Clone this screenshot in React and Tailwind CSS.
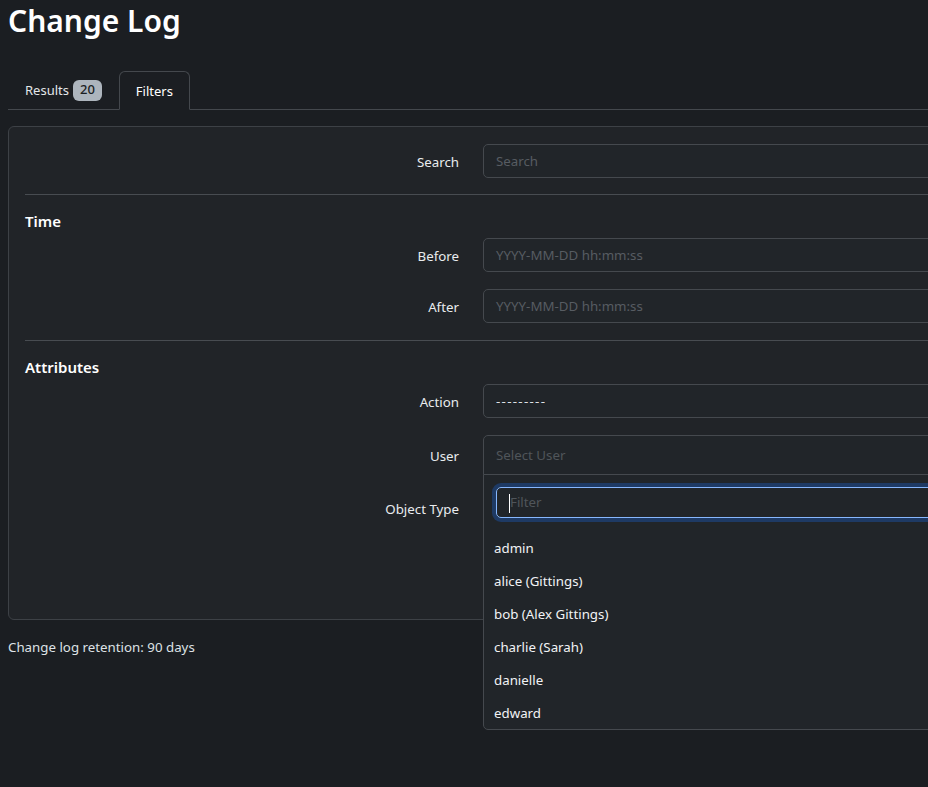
import React from "react";

const font = { fontFamily: '"Noto Sans", "Open Sans", sans-serif' };

function Row({ label, children, className = "" }) {
  return (
    <div className={"flex items-center " + className}>
      <div className="w-[446px] shrink-0 pr-3 pt-[3px] text-right text-[13.3px] text-[#e9ecef]">{label}</div>
      <div className="flex-1 pl-3">{children}</div>
    </div>
  );
}

function TextInput({ placeholder, value }) {
  return (
    <div className="h-[34px] w-full rounded-[5px] border border-[#45494e] bg-[#212529] px-3 pt-[2px] flex items-center text-[13.3px]">
      {value ? (
        <span className="text-[#dee2e6] tracking-[1.3px]">{value}</span>
      ) : (
        <span className="text-[#575c62]">{placeholder}</span>
      )}
    </div>
  );
}

export default function App() {
  const users = ["admin", "alice (Gittings)", "bob (Alex Gittings)", "charlie (Sarah)", "danielle", "edward"];
  return (
    <div style={font} className="w-[928px] h-[787px] overflow-hidden bg-[#1b1e22] text-[#dee2e6]">
      <div className="w-[1500px] px-2">
        <h1 className="pt-[1px] text-[30px] leading-[40px] font-semibold text-white">Change Log</h1>
        <div className="mt-[30px] flex border-b border-[#44484d] h-[39px] text-[13px]">
          <div className="flex items-center px-4 pt-[2px] border border-transparent text-[#e3e6e9]">
            Results
            <span className="ml-1 mb-[2px] rounded-[6px] bg-[#adb5bd] px-[7px] h-[21px] flex items-center text-[13px] font-medium text-[#1b1e22]">20</span>
          </div>
          <div className="flex items-center px-4 pt-[2px] mb-[-1px] rounded-t-[6px] border border-[#44484d] border-b-[#1b1e22] bg-[#1b1e22] text-white">
            Filters
          </div>
        </div>
        <div className="mt-4 h-[494px] rounded-[6px] border border-[#3d4146] bg-[#212428] px-4 pt-[17px]">
          <Row label="Search">
            <TextInput placeholder="Search" />
          </Row>
          <div className="my-4 border-t border-[#484c51]" />
          <div className="text-[15px] font-semibold text-white h-[20px] leading-[20px] mt-[16px] mb-[7px]">Time</div>
          <Row label="Before" className="mb-[17px]">
            <TextInput placeholder="YYYY-MM-DD hh:mm:ss" />
          </Row>
          <Row label="After">
            <TextInput placeholder="YYYY-MM-DD hh:mm:ss" />
          </Row>
          <div className="mt-[17px] mb-4 border-t border-[#484c51]" />
          <div className="text-[15px] font-semibold text-white h-[20px] leading-[20px] mt-[16px] mb-[7px]">Attributes</div>
          <Row label="Action" className="mb-[17px]">
            <TextInput value="---------" />
          </Row>
          <Row label="User" className="mb-4">
            <div className="relative">
              <div className="h-[40px] rounded-t-[5px] border border-[#45494e] bg-[#212529] px-3 pt-[2px] flex items-center text-[13.3px] text-[#50555a]">
                Select User
              </div>
              <div className="absolute left-0 right-0 top-[39px] z-10 h-[256px] rounded-b-[5px] border border-[#45494e] bg-[#212529]">
                <div className="px-3 pt-3">
                  <div className="h-[31px] rounded-[5px] border border-[#86b7fe] ring-4 ring-[#1e3a64] px-3 pt-[1px] flex items-center text-[13.3px]">
                    <span className="w-px h-[19px] bg-white" />
                    <span className="text-[#50555a]">Filter</span>
                  </div>
                </div>
                <div className="mt-[13px]">
                  {users.map((u) => (
                    <div key={u} className="h-[33px] px-[10px] pt-[2px] flex items-center text-[13.3px] text-[#f1f3f5]">
                      {u}
                    </div>
                  ))}
                </div>
              </div>
            </div>
          </Row>
          <Row label="Object Type">
            <TextInput placeholder="" />
          </Row>
        </div>
        <div className="mt-[18px] text-[13.3px] text-[#dee2e6]">Change log retention: 90 days</div>
      </div>
    </div>
  );
}
